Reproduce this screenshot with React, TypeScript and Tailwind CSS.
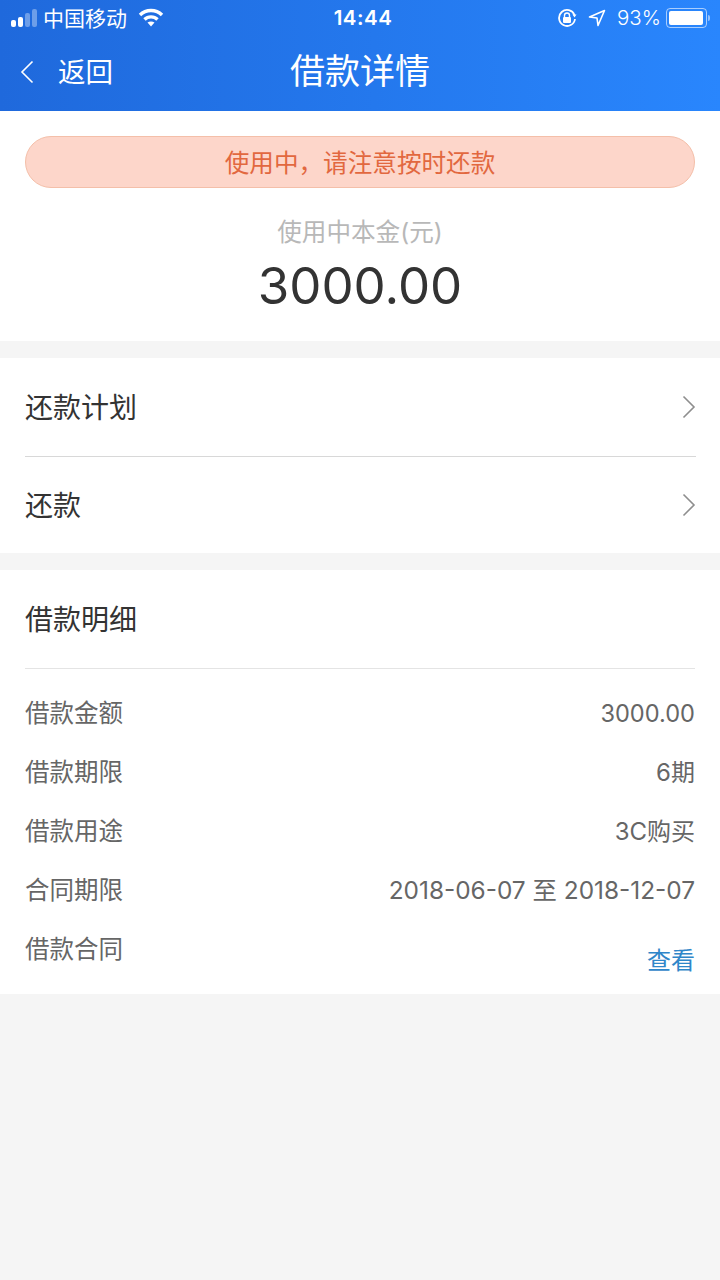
const cjk = "font-['Inter','Noto_Sans_CJK_SC',sans-serif]";

const details = [
  { label: "借款金额", value: "3000.00", size: "text-[23.6px]" },
  { label: "借款期限", value: "6期", size: "text-[24px]" },
  { label: "借款用途", value: "3C购买", size: "text-[24px]" },
  { label: "合同期限", value: "2018-06-07 至 2018-12-07", size: "text-[24.4px]" },
];

function Chevron({ flip = false }: { flip?: boolean }) {
  return (
    <svg width="14" height="24" viewBox="0 0 14 24" fill="none" className={flip ? "rotate-180" : ""}>
      <path d="M1.5 1.5 L12 12 L1.5 22.5" stroke="currentColor" strokeWidth="1.6" />
    </svg>
  );
}

function StatusBar() {
  return (
    <div className="flex h-[36px] items-center text-white">
      <div className="flex w-[300px] items-center">
        <div className="ml-[11px] flex items-end gap-[2px]">
          <span className="h-[7px] w-[5px] rounded-[2px] bg-white" />
          <span className="h-[10px] w-[5px] rounded-[2px] bg-white" />
          <span className="h-[14px] w-[5px] rounded-[2px] bg-white/35" />
          <span className="h-[18px] w-[5px] rounded-[2px] bg-white/35" />
        </div>
        <span className="ml-[6px] text-[21px] leading-none">中国移动</span>
        <svg width="26" height="20" viewBox="0 0 26 20" className="ml-[11px]" fill="none" stroke="white" strokeWidth="3.4">
          <path d="M2 7 C8 1 18 1 24 7" />
          <path d="M6.5 11.5 C10 8 16 8 19.5 11.5" />
          <path d="M13 18.5 L9.5 14.5 C11.5 13 14.5 13 16.5 14.5 Z" fill="white" stroke="none" />
        </svg>
      </div>
      <span className="ml-[33px] w-[60px] text-center text-[20.5px] font-semibold tracking-[0.5px]">14:44</span>
      <div className="ml-auto flex items-center pr-[10px]">
        <svg width="20" height="20" viewBox="0 0 20 20" fill="none" stroke="white" strokeWidth="1.8">
          <path d="M17.5 7 A8 8 0 1 0 18 11" />
          <path d="M15.5 6.5 L19.5 6.5 L17.5 9.5 Z" fill="white" stroke="none" />
          <rect x="6" y="9" width="8" height="6" rx="1" fill="white" stroke="none" />
          <path d="M7.5 9 V7.5 A2.5 2.5 0 0 1 12.5 7.5 V9" strokeWidth="1.4" />
        </svg>
        <svg width="18" height="18" viewBox="0 0 18 18" fill="none" stroke="white" strokeWidth="1.6" className="ml-[11px]">
          <path d="M1.5 8 L16.5 1.5 L10 16.5 L9 9 Z" strokeLinejoin="round" />
        </svg>
        <span className="ml-[11px] text-[20.5px] leading-none font-light">93%</span>
        <div className="ml-[5px] flex h-[20px] w-[41px] items-center rounded-[4px] border border-white/60 p-[2px]">
          <div className="h-full w-[34px] rounded-[2px] bg-white" />
        </div>
        <span className="ml-[1px] h-[6px] w-[2px] rounded-r-sm bg-white/50" />
      </div>
    </div>
  );
}

export default function App() {
  return (
    <div className={`${cjk} flex min-h-[1280px] flex-col bg-[#f5f5f5]`}>
      <header className="h-[111px] bg-gradient-to-r from-[#1f69dc] to-[#2986fd] text-white">
        <StatusBar />
        <div className="relative flex h-[71px] items-center">
          <span className="ml-[20px] flex">
            <Chevron flip />
          </span>
          <span className="ml-[24px] pt-[2px] text-[27.5px] leading-none">返回</span>
          <h1 className="absolute inset-x-0 text-center text-[35px] leading-none font-normal">借款详情</h1>
        </div>
      </header>

      <section className="flex h-[230px] flex-col items-center bg-white px-[25px] pt-[25px]">
        <div className="flex h-[52px] w-full items-center justify-center rounded-full border border-[#f4bfa9] bg-[#fdd6ca] pt-[2px] text-[24.6px] text-[#e2683f]">
          使用中，请注意按时还款
        </div>
        <p className="mt-[32px] text-[24.6px] leading-none text-[#b8b8b8]">使用中本金(元)</p>
        <p className="mt-[15px] text-[51px] leading-none text-[#333]">3000.00</p>
      </section>

      <section className="mt-[17px] bg-white pl-[25px] pr-[24px]">
        <div className="flex h-[99px] items-center justify-between border-b border-[#d8d8d8] pt-[2px] text-[28px] text-[#333]">
          还款计划
          <span className="mb-[2px] flex text-[#8e8e8e]">
            <Chevron />
          </span>
        </div>
        <div className="flex h-[96px] items-center justify-between pt-[2px] text-[28px] text-[#333]">
          还款
          <span className="mb-[2px] flex text-[#8e8e8e]">
            <Chevron />
          </span>
        </div>
      </section>

      <section className="mt-[17px] h-[424px] bg-white px-[25px]">
        <h2 className="flex h-[99px] items-center border-b border-[#e4e4e4] pt-[2px] text-[28px] font-normal text-[#333]">
          借款明细
        </h2>
        <div className="flex flex-col gap-[24px] pt-[27px] text-[24px] leading-[35px] text-[#666]">
          {details.map((row) => (
            <div key={row.label} className="flex h-[35px] items-center justify-between">
              <span className="text-[24.5px]">{row.label}</span>
              <span className={row.size}>{row.value}</span>
            </div>
          ))}
          <div className="flex h-[35px] justify-between">
            <span className="text-[24.5px]">借款合同</span>
            <span className="mt-[11px] text-[#2f86c9]">查看</span>
          </div>
        </div>
      </section>
    </div>
  );
}
